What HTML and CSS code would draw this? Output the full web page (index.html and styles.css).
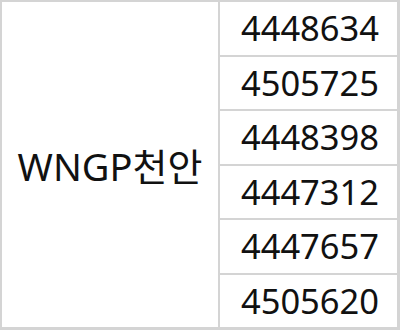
FILE: index.html
```html
<!DOCTYPE html>
<html lang="ko">
<head>
<meta charset="utf-8">
<link rel="stylesheet" href="styles.css">
</head>
<body>
<div class="sheet">
  <div class="cell name">WNGP천안</div>
  <div class="cell num">4448634</div>
  <div class="cell num">4505725</div>
  <div class="cell num">4448398</div>
  <div class="cell num">4447312</div>
  <div class="cell num">4447657</div>
  <div class="cell num">4505620</div>
</div>
</body>
</html>
```
FILE: styles.css
```css
html, body {
  margin: 0;
  padding: 0;
  background: #ffffff;
}
.sheet {
  width: 400px;
  height: 330px;
  box-sizing: border-box;
  padding: 2px 3px 3px 2px;
  background: #d4d4d4;
  display: grid;
  grid-template-columns: 216px 1fr;
  grid-template-rows: repeat(6, 1fr);
  gap: 2px;
  font-family: "Noto Sans", "Noto Sans CJK KR", sans-serif;
  color: #111111;
}
.cell {
  background: #ffffff;
  display: flex;
  align-items: center;
  justify-content: center;
  line-height: 1;
}
.name {
  grid-row: 1 / span 6;
  grid-column: 1;
  font-size: 38px;
  padding-top: 2px;
}
.num {
  grid-column: 2;
  font-size: 34.5px;
  padding-left: 3px;
}
```
